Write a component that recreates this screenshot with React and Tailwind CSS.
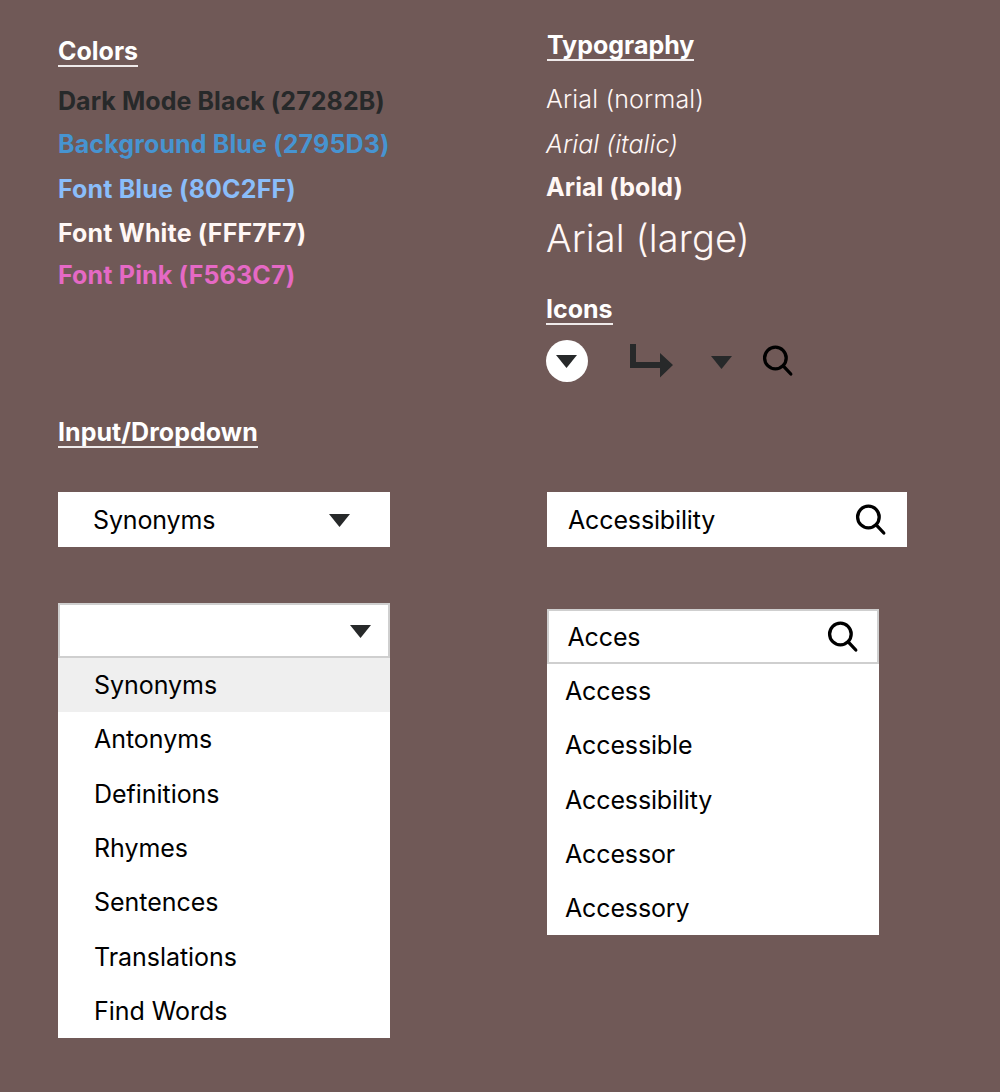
const down = "M0 0H21L10.5 13Z";
const T = ({ className = "" }) => (
  <svg className={"shrink-0 " + className} width="21" height="13" viewBox="0 0 21 13"><path d={down} fill="#27292a" /></svg>
);
const Search = () => (
  <svg className="shrink-0" width="32" height="32" viewBox="0 0 32 32" fill="none" stroke="#000" strokeWidth="3.3" strokeLinecap="round"><circle cx="13.4" cy="13" r="10.8" /><path d="M21.2 20.8L28.8 29" /></svg>
);
const Heading = ({ children }) => (
  <h2 className="w-fit border-b-2 border-[#efeaea] pt-[2px] font-bold leading-[28px]">{children}</h2>
);
const colors = [
  ["Dark Mode Black (27282B)", "text-[#27292a]", "h-[43px] tracking-[0.07px]"],
  ["Background Blue (2795D3)", "text-[#4794d1]", "h-[45px] tracking-[0.14px]"],
  ["Font Blue (80C2FF)", "text-[#8abdfa]", "h-[44px] tracking-[0.15px]"],
  ["Font White (FFF7F7)", "text-[#fff7f5]", "h-[42px] tracking-[0.17px]"],
  ["Font Pink (F563C7)", "text-[#e569c5]", "h-[43px] tracking-[0.17px]"],
];
export default function App() {
  return (
    <main className="grid h-[1092px] w-[1000px] grid-cols-[488px_1fr] grid-rows-[416px_1fr] bg-[#705957] pl-[58px] font-['Inter',sans-serif] text-[25px] leading-[30px]">
      <section className="pt-[35px]">
        <div className="text-white"><Heading>Colors</Heading></div>
        <div className="mt-[19px] font-bold">
          {colors.map(([t, c, h]) => <p key={t} className={c + " " + h}>{t}</p>)}
        </div>
      </section>
      <section className="pt-[29px] text-[#fff7f5]">
        <div className="pl-px text-white"><Heading>Typography</Heading></div>
        <p className="mt-[23px] h-[45px] font-light tracking-[0.15px]">Arial (normal)</p>
        <p className="h-[43px] font-light italic tracking-[0.08px]">Arial (italic)</p>
        <p className="font-bold tracking-[0.05px]">Arial (bold)</p>
        <p className="mt-[12px] text-[38px] font-light leading-[48px] tracking-[0.1px]">Arial (large)</p>
        <div className="mt-[31px] text-white"><Heading>Icons</Heading></div>
        <div className="mt-[15px] flex h-[42px] items-center">
          <span className="flex size-[42px] items-center justify-center rounded-full bg-white"><T className="-ml-px" /></span>
          <svg className="ml-[42px]" width="43" height="34" viewBox="0 0 43 34" fill="#27292a"><path d="M0 0H6V18H30V9L43 21L30 33.5V24H0Z" /></svg>
          <T className="ml-[38px] mt-[3px]" />
          <span className="ml-[30px]"><Search /></span>
        </div>
      </section>
      <section className="text-black">
        <div className="tracking-[0.05px] text-white"><Heading>Input/Dropdown</Heading></div>
        <div className="mt-[44px] flex h-[55px] w-[332px] items-center justify-between bg-white pl-[35px] pr-[40px]"><span className="tracking-[-0.15px]">Synonyms</span><T className="mt-px" /></div>
        <div className="mt-[56px] w-[332px] bg-white">
          <div className="flex h-[55px] items-center justify-end border-2 border-[#cfcfcf] pr-[17px]"><T className="mt-px" /></div>
          {["Synonyms", "Antonyms", "Definitions", "Rhymes", "Sentences", "Translations", "Find Words"].map((t, i) => (
            <div key={t} className={"flex h-[54.3px] items-center pl-[36px] tracking-[-0.04px] " + (i === 0 ? "bg-[#efefef]" : "")}>{t}</div>
          ))}
        </div>
      </section>
      <section className="pl-px pt-[76px] tracking-[-0.14px] text-black">
        <div className="flex h-[55px] w-[360px] items-center justify-between bg-white pl-[21px] pr-[20px]"><span>Accessibility</span><Search /></div>
        <div className="mt-[62px] w-[332px] bg-white">
          <div className="flex h-[55px] items-center justify-between border-2 border-[#cfcfcf] pl-[18.5px] pr-[18px]"><span>Acces</span><Search /></div>
          {["Access", "Accessible", "Accessibility", "Accessor", "Accessory"].map((t) => (
            <div key={t} className="flex h-[54.3px] items-center pl-[18px]">{t}</div>
          ))}
        </div>
      </section>
    </main>
  );
}
